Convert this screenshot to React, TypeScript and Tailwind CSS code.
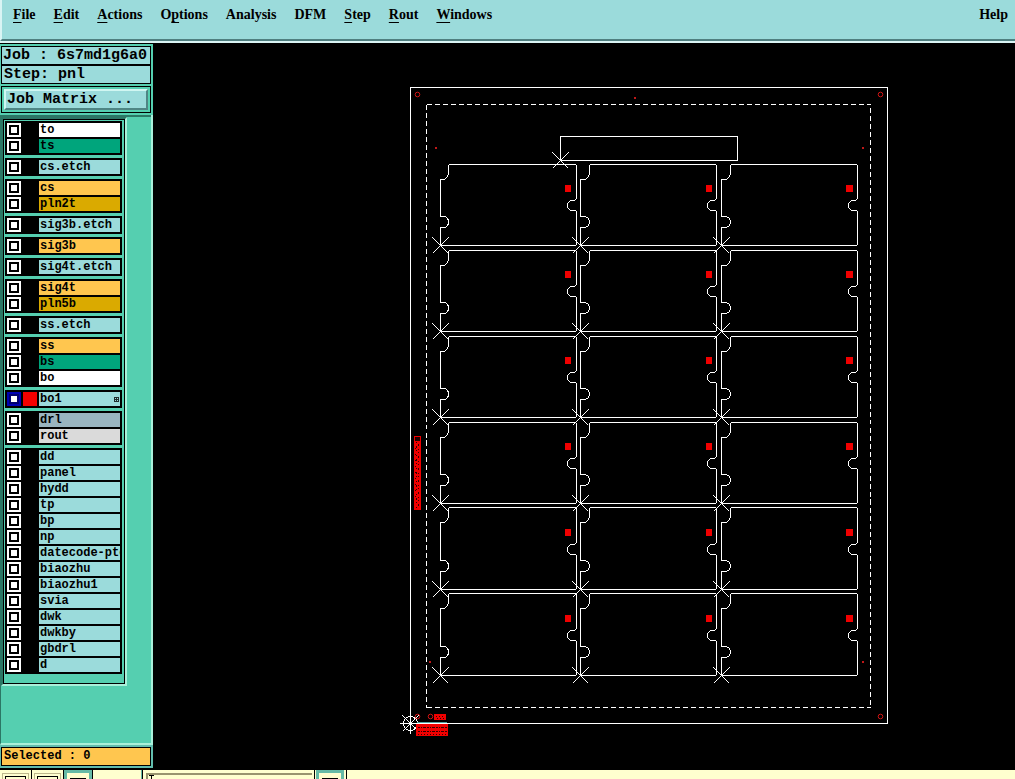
import React from "react";

type Layer = { name: string; tone: string; active?: boolean };

const AQUA = "bg-[#9bdbdb]";
const AMBER = "bg-[#ffc64f]";
const GOLD = "bg-[#daaa00]";
const GREEN = "bg-[#00a57c]";

const groups: Layer[][] = [
  [
    { name: "to", tone: "bg-white" },
    { name: "ts", tone: GREEN },
  ],
  [{ name: "cs.etch", tone: AQUA }],
  [
    { name: "cs", tone: AMBER },
    { name: "pln2t", tone: GOLD },
  ],
  [{ name: "sig3b.etch", tone: AQUA }],
  [{ name: "sig3b", tone: AMBER }],
  [{ name: "sig4t.etch", tone: AQUA }],
  [
    { name: "sig4t", tone: AMBER },
    { name: "pln5b", tone: GOLD },
  ],
  [{ name: "ss.etch", tone: AQUA }],
  [
    { name: "ss", tone: AMBER },
    { name: "bs", tone: GREEN },
    { name: "bo", tone: "bg-white" },
  ],
  [{ name: "bo1", tone: AQUA, active: true }],
  [
    { name: "drl", tone: "bg-[#9ab5c0]" },
    { name: "rout", tone: "bg-[#dadada]" },
  ],
  [
    "dd", "panel", "hydd", "tp", "bp", "np", "datecode-pto", "biaozhu",
    "biaozhu1", "svia", "dwk", "dwkby", "gbdrl", "d",
  ].map((name) => ({ name, tone: AQUA })),
];

const menus: [string, number][] = [
  ["File", 0],
  ["Edit", 0],
  ["Actions", 0],
  ["Options", 1],
  ["Analysis", -1],
  ["DFM", -1],
  ["Step", 0],
  ["Rout", 0],
  ["Windows", 0],
];

function MenuItem({ text, mnemonic }: { text: string; mnemonic: number }) {
  return (
    <button type="button" className="leading-4 whitespace-nowrap">
      {mnemonic < 0 ? (
        text
      ) : (
        <>
          {text.slice(0, mnemonic)}
          <span className="underline decoration-1 underline-offset-3 [text-decoration-skip-ink:none]">
            {text[mnemonic]}
          </span>
          {text.slice(mnemonic + 1)}
        </>
      )}
    </button>
  );
}

function MenuBar() {
  return (
    <header className="flex h-[43px] shrink-0 flex-col border-b-2 border-[#d9f4f4] bg-[#9bdbdb]">
      <nav className="flex flex-1 items-start gap-[18px] border-b-2 border-l-2 border-b-[#4f7f80] border-l-[#d9f4f4] pt-[7px] pr-[7px] pl-[11px] font-['Liberation_Serif',serif] text-[14px] font-bold">
        {menus.map(([text, mnemonic]) => (
          <MenuItem key={text} text={text} mnemonic={mnemonic} />
        ))}
        <div className="ml-auto flex">
          <MenuItem text="Help" mnemonic={-1} />
        </div>
      </nav>
    </header>
  );
}

function LayerRow({ layer }: { layer: Layer }) {
  return (
    <label className="flex h-[14px] gap-[2px]">
      <input
        type="checkbox"
        defaultChecked={layer.active}
        className={
          layer.active
            ? "size-[14px] shrink-0 appearance-none border-2 border-[#0000b4] bg-white shadow-[inset_0_0_0_2px_#000070]"
            : "size-[14px] shrink-0 appearance-none border-2 border-white bg-white shadow-[inset_0_0_0_2px_#000]"
        }
      />
      <span className={layer.active ? "w-[14px] shrink-0 bg-[#f40000]" : "w-[14px] shrink-0 bg-black"} />
      <span className={`flex min-w-0 flex-1 items-center justify-between overflow-x-clip pl-px text-[12px] leading-[14px] whitespace-nowrap [overflow-clip-margin:2px] ${layer.tone}`}>
        {layer.name}
        {layer.active && (
          <svg viewBox="0 0 5 5" className="mr-px size-[5px] shrink-0" shapeRendering="crispEdges">
            <path d="M.5 .5h4v4h-4zM2.5 0v5M0 2.5h5" fill="none" stroke="#000" strokeWidth="1" opacity=".8" />
          </svg>
        )}
      </span>
    </label>
  );
}

function Sidebar() {
  return (
    <aside className="flex w-[153px] shrink-0 flex-col border-t border-black bg-[#55cfb0] font-['Liberation_Mono',monospace] font-bold">
      <div className="flex flex-col gap-[2px] px-px pt-[2px] pr-[2px] text-[15px]">
        <div className="border border-black bg-black">
          <div className="flex flex-col gap-[2px] leading-[17px] whitespace-pre">
            <div className="bg-[#9bdbdb] pl-px">Job : 6s7md1g6a0</div>
            <div className="bg-[#9bdbdb] pl-[2px]">Step: pnl</div>
          </div>
        </div>
        <div className="flex border border-black p-[2px]">
          <button
            type="button"
            className="h-[21px] flex-1 border-2 border-t-[#d0f6f2] border-r-[#4f8584] border-b-[#4f8584] border-l-[#d0f6f2] bg-[#9bdbdb] pl-px text-left leading-[17px]"
          >
            Job Matrix ...
          </button>
        </div>
      </div>
      <div className="mt-[2px] flex flex-1 flex-col border-r-2 border-b-2 border-l border-r-[#a9f0da] border-b-[#a9f0da] border-l-[#2b7765]">
        <div className="flex h-[2px] shrink-0 bg-[#2b7765]" />
        <div className="mr-[24px] border-2 border-t-[#2b7765] border-r-[#a9f0da] border-b-[#a9f0da] border-l-[#2b7765]">
          <div className="flex flex-col gap-[3px] border border-black px-px pt-px pb-[9px]">
            {groups.map((layers) => (
              <div key={layers[0].name} className="mr-px flex flex-col gap-[2px] bg-black p-[2px]">
                {layers.map((layer) => (
                  <LayerRow key={layer.name} layer={layer} />
                ))}
              </div>
            ))}
          </div>
        </div>
      </div>
      <div className="border-b-2 border-black">
        <div className="border-2 border-l border-[#62bdae]">
          <div className="border border-black bg-[#ffc64f] pl-[2px] text-[12px] leading-[17px] whitespace-pre">
            Selected : 0
          </div>
        </div>
      </div>
    </aside>
  );
}

const columns = [
  { left: 440.5, right: 576.5, notch: 8, mark: 565, markWidth: 6 },
  { left: 580.5, right: 716.5, notch: 9, mark: 706, markWidth: 6 },
  { left: 721.5, right: 857.5, notch: 9, mark: 846, markWidth: 7 },
];

const rows = [
  { top: 164.5, bottom: 245.5 },
  { top: 250.5, bottom: 331.5 },
  { top: 336.5, bottom: 417.5 },
  { top: 422.5, bottom: 503.5 },
  { top: 507.5, bottom: 589.5 },
  { top: 593.5, bottom: 675.5 },
];

function boardPath(l: number, r: number, n: number, t: number, b: number) {
  return [
    `M${l + n + 1} ${t}L${l + n} ${t + 1}V${t + 10}`,
    `L${l + n - 2} ${t + 13}L${l + n - 4} ${t + 15}H${l}`,
    `V${b - 29}H${l + 4}Q${l + n} ${b - 28} ${l + n} ${b - 23.5}Q${l + n} ${b - 19} ${l + 4} ${b - 18}H${l}`,
    `V${b}H${r - 1}L${r} ${b - 1}V${b - 34}L${r - 1} ${b - 35}H${r - 5}`,
    `Q${r - 9} ${b - 36} ${r - 9} ${b - 40}Q${r - 9} ${b - 44} ${r - 5} ${b - 45}H${r - 2}L${r} ${b - 47}`,
    `V${t + 1}L${r - 1} ${t}Z`,
  ].join("");
}

function cross(x: number, y: number) {
  return `M${x - 8} ${y - 8}L${x + 8} ${y + 8}M${x + 8} ${y - 8}L${x - 8} ${y + 8}`;
}

const targets = [[417.5, 94.5], [880.5, 94.5], [880.5, 716.5], [417.5, 716.5], [430.5, 716.5]];
const fiducials = [[435, 147], [862, 147], [634, 97], [429, 661], [862, 661]];

function PanelDrawing() {
  return (
    <svg viewBox="153 43 862 727" className="block h-auto w-full" shapeRendering="crispEdges" role="img" aria-label="Panel">
      <g fill="none" stroke="#fff" strokeWidth="1">
        <rect x="410.5" y="87.5" width="477" height="636" />
        <path d="M426.5 104.5H870.5M426.5 707.5H870.5" strokeDasharray="5 3" />
        <path d="M426.5 104.5V707.5M870.5 107.5V707.5" strokeDasharray="5 3" />
        <rect x="560.5" y="136.5" width="177" height="24" />
        {rows.map((row) =>
          columns.map((c) => (
            <path key={`${row.top}-${c.left}`} d={boardPath(c.left, c.right, c.notch, row.top, row.bottom)} />
          )),
        )}
        <path d={cross(560.5, 160.5)} />
        {rows.map((row) =>
          columns.map((c) => <path key={`x${row.top}-${c.left}`} d={cross(c.left, row.bottom)} />),
        )}
        <circle cx="410.5" cy="723.5" r="7" />
        <path d="M400 723.5H421M410.5 713V734" />
        <path d={cross(410.5, 723.5)} />
      </g>
      <g fill="#f00000">
        {rows.map((row) =>
          columns.map((c) => (
            <rect key={`m${row.top}-${c.left}`} x={c.mark} y={row.bottom - 60.5} width={c.markWidth} height="7" />
          )),
        )}
        <rect x="414" y="436" width="7" height="74" />
        <rect x="434" y="714" width="12" height="6" />
        <rect x="416" y="724" width="32" height="12" />
      </g>
      <g fill="#c01818">
        {fiducials.map(([x, y]) => (
          <rect key={`${x}-${y}`} x={x} y={y} width="2" height="2" />
        ))}
      </g>
      <g fill="none" stroke="#d41414" strokeWidth="1" shapeRendering="auto">
        {targets.map(([x, y]) => (
          <circle key={`${x}-${y}`} cx={x} cy={y} r="2.3" />
        ))}
      </g>
      <path d="M417 722.5H447" stroke="#4fa3a3" strokeWidth="1" />
      <g fill="none" stroke="#300" strokeWidth="1">
        <path d="M418 727.5H447M418 731.5H447" strokeDasharray="2 1 1 1 3 1" />
        <path d="M418 734.5H447" strokeDasharray="1 2" />
        <path d="M436 716.5H444M437 718.5H444" strokeDasharray="1 2" />
        <path d="M416.5 442V508" strokeDasharray="1 3 2 2 1 4" />
        <path d="M418.5 444V508" strokeDasharray="2 3 1 2 1 3" />
        <path d="M415.5 448V500" strokeDasharray="1 5" />
      </g>
      <rect x="415" y="437" width="5" height="4" fill="#200" />
    </svg>
  );
}

function ToolButton({ label, framed }: { label: string; framed?: boolean }) {
  return (
    <button
      type="button"
      aria-label={label}
      className={
        framed
          ? "flex h-7 w-7 shrink-0 border-[3px] border-[#66baa6] bg-[#ffffcf] px-[3px] pt-[5px]"
          : "flex h-7 w-[31px] shrink-0 border-x-2 border-t-[3px] border-[#ffffcf] bg-[#ffffcf]"
      }
    >
      <span
        className={
          framed
            ? "h-5 flex-1 border-t border-black"
            : "flex h-6 flex-1 border border-[#bdb78c] px-[2px] pt-[2px]"
        }
      >
        {!framed && <span className="h-5 flex-1 border border-black" />}
      </span>
    </button>
  );
}

function BottomBar() {
  return (
    <footer className="flex h-[9px] shrink-0 items-start overflow-hidden bg-[#ffffcf]">
      <div className="flex shrink-0 gap-px bg-black pr-px">
        <ToolButton label="Display" />
        <ToolButton label="Layers" />
        <ToolButton label="Zoom" framed />
      </div>
      <div className="ml-[48px] w-[2px] shrink-0 self-stretch border-l border-[#66baa6] bg-black" />
      <div className="relative ml-px flex w-[170px] shrink-0">
        <input
          type="text"
          aria-label="Command"
          className="h-7 w-full border-2 border-t-[3px] border-[#ffffcf] bg-[#ffffcf] shadow-[inset_2px_2px_0_#99946e]"
        />
        <svg viewBox="0 0 5 12" className="absolute top-[5px] left-[5px] h-3 w-[5px]" shapeRendering="crispEdges" aria-hidden="true">
          <path d="M0 .5H5M2.5 0V12M0 11.5H5" stroke="#000" fill="none" />
        </svg>
      </div>
      <div className="mr-px w-px shrink-0 self-stretch bg-black" />
      <ToolButton label="Snap" framed />
      <div className="ml-[2px] w-px shrink-0 self-stretch bg-black" />
    </footer>
  );
}

export default function App() {
  return (
    <div className="flex h-screen flex-col overflow-hidden bg-black text-black">
      <MenuBar />
      <div className="flex min-h-0 flex-1">
        <Sidebar />
        <main className="min-w-0 flex-1 overflow-hidden bg-black">
          <PanelDrawing />
        </main>
      </div>
      <BottomBar />
    </div>
  );
}
